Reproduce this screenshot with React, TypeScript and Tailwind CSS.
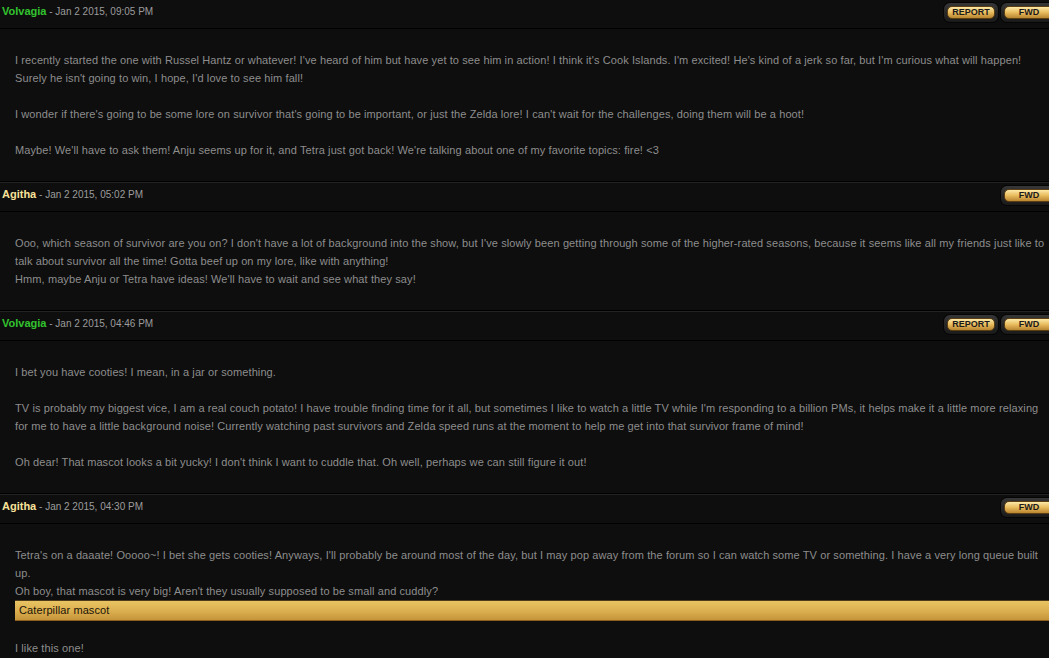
import type { ReactNode } from 'react'

type Post = {
  author: string
  color: 'green' | 'gold'
  date: string
  report?: boolean
  body: ReactNode
}

const posts: Post[] = [
  {
    author: 'Volvagia',
    color: 'green',
    date: 'Jan 2 2015, 09:05 PM',
    report: true,
    body: (
      <>
        I recently started the one with Russel Hantz or whatever! I've heard of him but have yet to see him in action! I think it's Cook Islands. I'm excited! He's kind of a jerk so far, but I'm curious what will happen!
        <br />
        Surely he isn't going to win, I hope, I'd love to see him fall!
        <br />
        <br />
        I wonder if there's going to be some lore on survivor that's going to be important, or just the Zelda lore! I can't wait for the challenges, doing them will be a hoot!
        <br />
        <br />
        Maybe! We'll have to ask them! Anju seems up for it, and Tetra just got back! We're talking about one of my favorite topics: fire! &lt;3
      </>
    ),
  },
  {
    author: 'Agitha',
    color: 'gold',
    date: 'Jan 2 2015, 05:02 PM',
    body: (
      <>
        Ooo, which season of survivor are you on? I don't have a lot of background into the show, but I've slowly been getting through some of the higher-rated seasons, because it seems like all my friends just like to
        <br />
        talk about survivor all the time! Gotta beef up on my lore, like with anything!
        <br />
        Hmm, maybe Anju or Tetra have ideas! We'll have to wait and see what they say!
      </>
    ),
  },
  {
    author: 'Volvagia',
    color: 'green',
    date: 'Jan 2 2015, 04:46 PM',
    report: true,
    body: (
      <>
        I bet you have cooties! I mean, in a jar or something.
        <br />
        <br />
        TV is probably my biggest vice, I am a real couch potato! I have trouble finding time for it all, but sometimes I like to watch a little TV while I'm responding to a billion PMs, it helps make it a little more relaxing
        <br />
        for me to have a little background noise! Currently watching past survivors and Zelda speed runs at the moment to help me get into that survivor frame of mind!
        <br />
        <br />
        Oh dear! That mascot looks a bit yucky! I don't think I want to cuddle that. Oh well, perhaps we can still figure it out!
      </>
    ),
  },
  {
    author: 'Agitha',
    color: 'gold',
    date: 'Jan 2 2015, 04:30 PM',
    body: (
      <>
        Tetra's on a daaate! Ooooo~! I bet she gets cooties! Anyways, I'll probably be around most of the day, but I may pop away from the forum so I can watch some TV or something. I have a very long queue built
        <br />
        up.
        <br />
        Oh boy, that mascot is very big! Aren't they usually supposed to be small and cuddly?
        <div className="h-[21px] border-t border-t-[#4d3b1c] border-b border-b-[#8e5f1c] bg-gradient-to-b from-[#e9c463] via-[#dcb050] to-[#c6953a] pl-[4px] text-[11px] leading-[19px] text-[#1a1408]">
          Caterpillar mascot
        </div>
        <br />
        I like this one!
      </>
    ),
  },
]

function GoldButton({ label, w }: { label: string; w: string }) {
  return (
    <div className="rounded-[6px] bg-gradient-to-b from-[#363636] to-[#1a1a1a] p-[3px] shadow-[0_0_0_1px_#050505]">
      <div
        className={`${w} h-[13px] rounded-[5px] border border-[#5b3f12] bg-gradient-to-b from-[#fdeaa8] via-[#e8bb5c] to-[#b98530] text-center text-[9px] font-bold leading-[11px] text-[#1a1a1a]`}
      >
        {label}
      </div>
    </div>
  )
}

function PostHeader({ post }: { post: Post }) {
  return (
    <div className="flex h-[31px] items-start justify-between border-y border-black shadow-[inset_0_1px_0_#232323] pl-[2px] pr-[3px]">
      <div className="pt-[4px] leading-[14px]">
        <span
          className={`text-[11px] font-bold ${post.color === 'green' ? 'text-[#33c42f]' : 'text-[#f8e29a]'}`}
        >
          {post.author}
        </span>
        <span className="text-[10px] text-[#9c9c9c]"> - {post.date}</span>
      </div>
      <div className="flex gap-[3px] pt-[4px]">
        {post.report && <GoldButton label="REPORT" w="w-[48px]" />}
        <GoldButton label="FWD" w="w-[50px]" />
      </div>
    </div>
  )
}

export default function App() {
  return (
    <div className="h-screen w-full overflow-hidden bg-[#0e0e0e] font-['Liberation_Sans',Arial,sans-serif]">
      <div className="-mt-[2px] w-[1060px]">
        {posts.map((post, i) => (
          <div key={i}>
            <PostHeader post={post} />
            <div className="whitespace-nowrap pl-[15px] pr-[10px] py-[22px] text-[11px] leading-[18px] tracking-[0.1px] text-[#8d8d8d]">
              {post.body}
            </div>
          </div>
        ))}
      </div>
    </div>
  )
}
